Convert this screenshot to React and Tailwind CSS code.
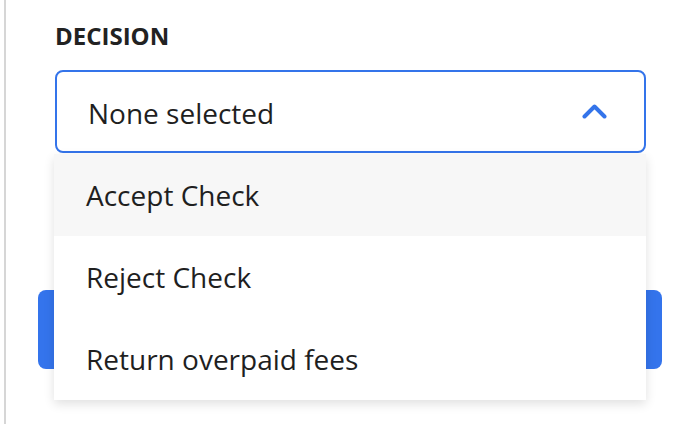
import { useState } from 'react';

const options = ['Accept Check', 'Reject Check', 'Return overpaid fees'];

export default function App() {
  const [hovered, setHovered] = useState(0);

  return (
    <div
      className="w-[694px] h-[424px] bg-white pl-[4px] overflow-hidden"
      style={{ fontFamily: '"Open Sans", sans-serif' }}
    >
      <div className="h-full border-l-2 border-[#d6d6d6] pl-[49px] pr-[48px] pt-[24px]">
        {/* Label */}
        <div className="text-[24px] leading-[24px] font-bold text-[#222]">
          DECISION
        </div>

        {/* Select */}
        <div className="relative mt-[22px] z-10">
          <button className="w-full h-[83px] flex items-center justify-between border-2 border-[#3474ea] rounded-[8px] bg-white pl-[31px] pr-[37px]">
            <span className="text-[28px] leading-[28px] text-[#1f1f1f] pt-[2px]">None selected</span>
            <svg width="25" height="15" viewBox="0 0 25 15" fill="none">
              <polyline
                points="2.5,12.5 12.5,2.5 22.5,12.5"
                stroke="#3474ea"
                strokeWidth="4"
                strokeLinecap="round"
                strokeLinejoin="round"
              />
            </svg>
          </button>

          {/* Menu */}
          <div className="absolute top-full left-[-1px] right-0 mt-px bg-white shadow-[0_4px_10px_rgba(0,0,0,0.12)]">
            {options.map((opt, i) => (
              <div
                key={opt}
                onMouseEnter={() => setHovered(i)}
                className={`h-[82px] flex items-center pl-[32px] text-[28px] leading-[28px] text-[#1f1f1f] ${
                  hovered === i ? 'bg-[#f7f7f7]' : 'bg-white'
                }`}
              >
                {opt}
              </div>
            ))}
          </div>
        </div>

        {/* Submit button, covered by the open menu */}
        <button
          aria-label="Submit"
          className="mt-[137px] ml-[-17px] w-[624px] h-[79px] rounded-[8px] bg-[#3474ec]"
        />
      </div>
    </div>
  );
}
